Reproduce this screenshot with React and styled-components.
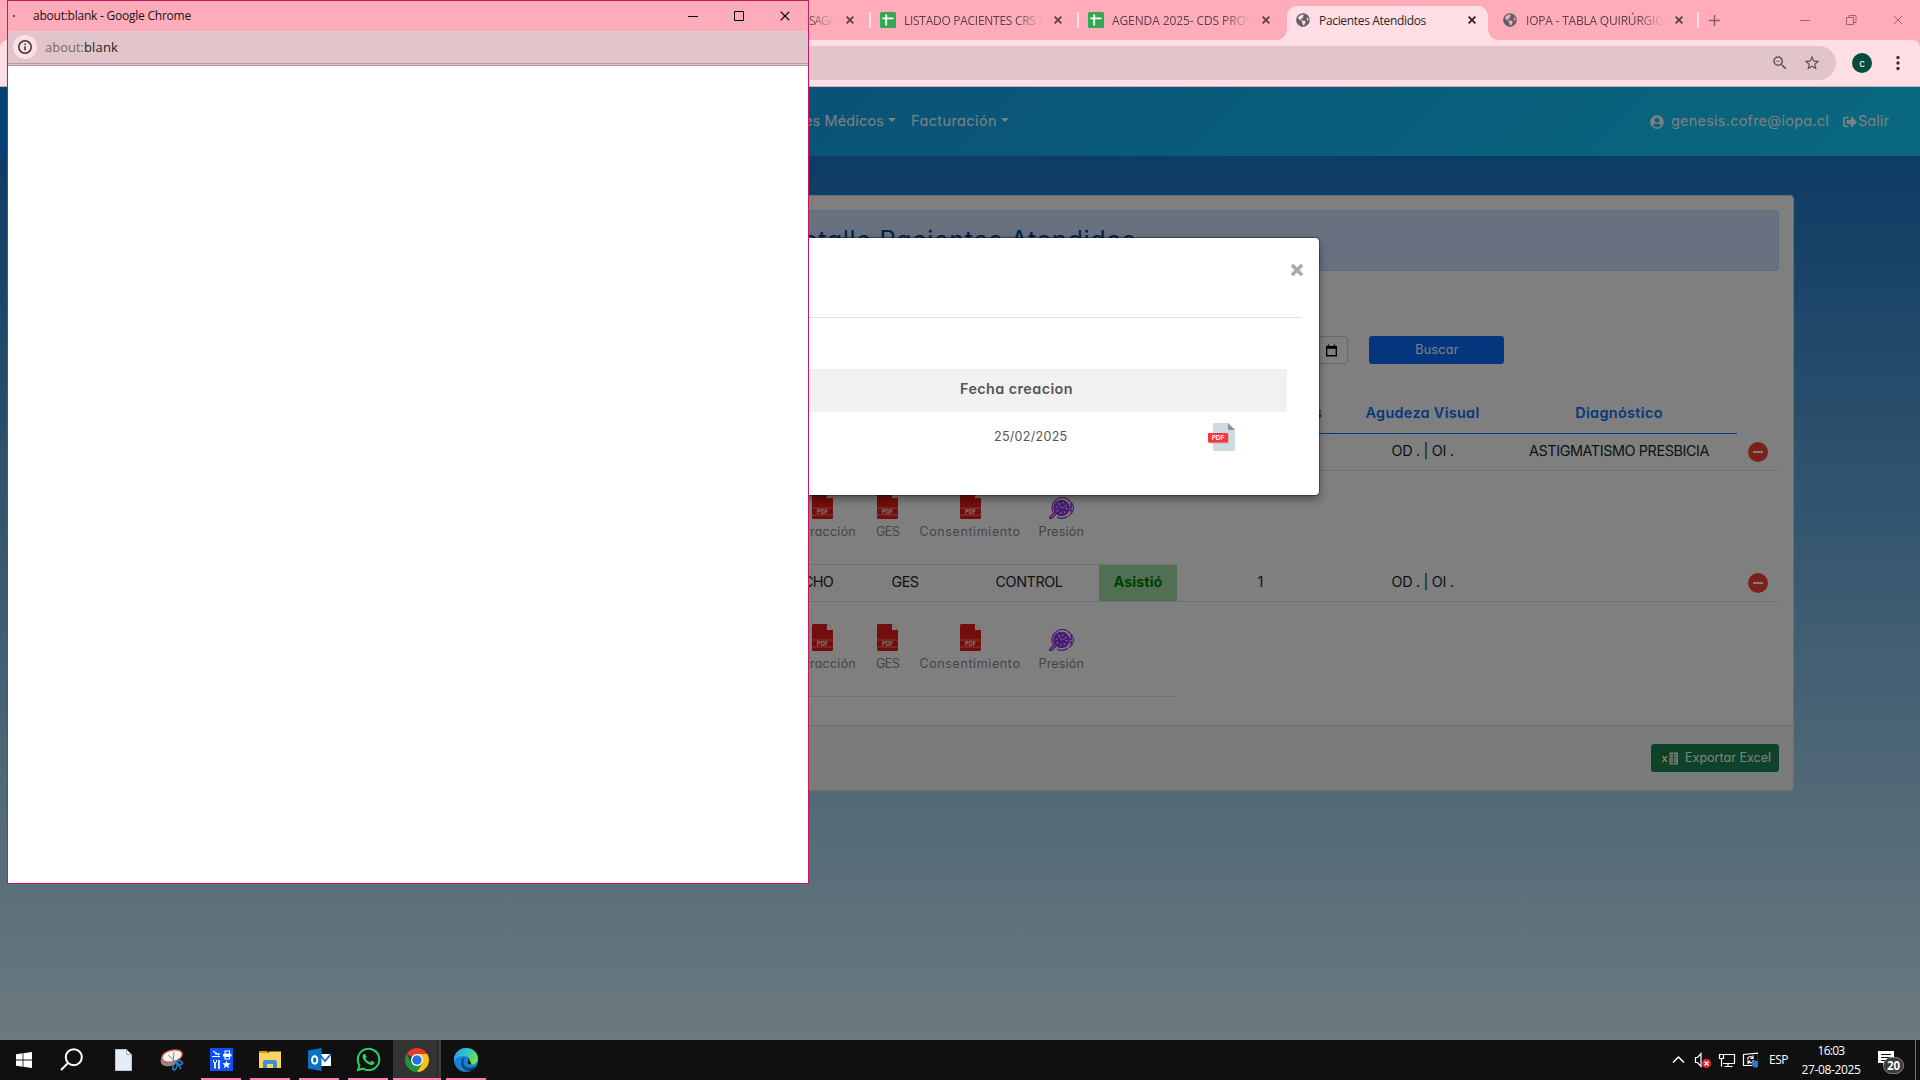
import React, { useLayoutEffect, useRef, useState } from "react";
import styled, { createGlobalStyle } from "styled-components";
import { FaUserCircle, FaSignOutAlt, FaGlobeAmericas, FaWhatsapp } from "react-icons/fa";
import { MdStarBorder, MdOutlineZoomOut } from "react-icons/md";

const SYSTEM = '"Open Sans", "Noto Sans", sans-serif';
const BRAND = 'Inter, "Open Sans", sans-serif';

const Global = createGlobalStyle`
  * { box-sizing: border-box; }
  body { margin: 0; overflow: hidden; background: #101010; font-family: ${SYSTEM}; }
  svg { display: block; flex: none; }
`;

const Desktop = styled.div`
  position: relative;
  width: 1920px;
  height: 1080px;
  display: flex;
  flex-direction: column;
  overflow: hidden;
`;

/* ---------- text ---------- */
const Span = styled.span`
  display: inline-block;
  white-space: nowrap;
  line-height: 1.3;
  flex: none;
  font-family: ${(p) => (p.$sys ? SYSTEM : BRAND)};
  font-size: ${(p) => p.$size || 14}px;
  font-weight: ${(p) => p.$weight || 400};
  color: ${(p) => p.$color || "inherit"};
  font-feature-settings: "cv11";
`;

/* Spreads the letters of a label over a set width. */
function Label({ w, sys, size, weight, color, children }) {
  const ref = useRef(null);
  const [spacing, setSpacing] = useState(0);
  useLayoutEffect(() => {
    if (w) setSpacing((w - ref.current.getBoundingClientRect().width) / String(children).length);
  }, [w, children]);
  return (
    <Span ref={ref} $sys={sys} $size={size} $weight={weight} $color={color} style={{ letterSpacing: spacing }}>
      {children}
    </Span>
  );
}

/* ---------- browser frame ---------- */
const Browser = styled.div`
  display: flex;
  flex-direction: column;
  height: 1040px;
  background: #ffacba;
`;
const TabStrip = styled.div`
  display: flex;
  align-items: center;
  height: 40px;
  padding-left: 809px;
`;
const Tab = styled.div`
  display: flex;
  align-items: center;
  width: ${(p) => p.$w}px;
  height: 40px;
  padding-left: ${(p) => p.$pad || 0}px;
  color: #5b3f48;
`;
const ActiveTab = styled(Tab)`
  position: relative;
  align-self: flex-end;
  height: 34px;
  padding-bottom: 6px;
  border-radius: 10px 10px 0 0;
  background: #ffdfe5;
  color: #2b1f24;
  &::before, &::after {
    content: "";
    position: absolute;
    bottom: 0;
    width: 10px;
    height: 10px;
  }
  &::before { left: -10px; background: radial-gradient(circle at 0 0, transparent 9.5px, #ffdfe5 10px); }
  &::after { right: -10px; background: radial-gradient(circle at 100% 0, transparent 9.5px, #ffdfe5 10px); }
`;
const TabTitle = styled.div`
  width: ${(p) => p.$w}px;
  margin-left: ${(p) => (p.$gap === undefined ? 8 : p.$gap)}px;
  padding-top: 1px;
  overflow: hidden;
  display: flex;
  ${(p) => p.$fade && "mask-image: linear-gradient(90deg, #000 calc(100% - 26px), transparent);"}
`;
const Separator = styled.div`
  width: 2px;
  height: 16px;
  flex: none;
  background: #ffdfe5;
  border-radius: 1px;
`;
const Push = styled.div`
  width: ${(p) => p.$w}px;
  height: ${(p) => p.$h || 0}px;
  flex: none;
`;
const Toolbar = styled.div`
  display: flex;
  align-items: center;
  height: 47px;
  background: #ffdfe5;
  border-bottom: 1px solid #c9b0b5;
  border-radius: 8px 8px 0 0;
  color: #5d5659;
`;
const Omnibox = styled.div`
  display: flex;
  align-items: center;
  justify-content: flex-end;
  gap: 14px;
  width: 1736px;
  height: 34px;
  margin-left: 100px;
  padding-right: 15px;
  border-radius: 17px;
  background: #e1c5ca;
`;
const Avatar = styled.div`
  display: flex;
  align-items: center;
  justify-content: center;
  width: 20px;
  height: 20px;
  margin: 0 24px 0 16px;
  border-radius: 50%;
  background: #004d40;
  color: #fff;
`;

function Cross({ size = 8, stroke = 1.8 }) {
  return (
    <svg width={size} height={size} viewBox="0 0 8 8" stroke="currentColor" strokeWidth={stroke} fill="none">
      <path d="M.6.6 7.4 7.4M7.4.6.6 7.4" />
    </svg>
  );
}
function Sheets() {
  return (
    <svg width="16" height="16" viewBox="0 0 16 16">
      <rect width="16" height="16" rx="1.5" fill="#34a853" />
      <path d="M6.2 2.5v11M2.5 6.3h11" stroke="#fff" strokeWidth="1.8" />
    </svg>
  );
}

/* ---------- web page ---------- */
const Page = styled.div`
  position: relative;
  flex: 1;
  display: flex;
  flex-direction: column;
  background: linear-gradient(#1a78c8, #d8f4fe) 0 69px / 100% 884px no-repeat;
`;
const Backdrop = styled.div`
  position: absolute;
  inset: 0;
  background: rgba(0, 0, 0, 0.5);
`;
const Navbar = styled.nav`
  display: flex;
  align-items: center;
  height: 69px;
  padding: 0 31px 0 804px;
  background: linear-gradient(135deg, #0e80e8, #14a6f0 42%, #12d2fe);
  color: #ffffff;
`;
const Caret = styled.i`
  margin: 1px 15px 4px 4px;
  border: 4px solid transparent;
  border-top-color: currentColor;
  border-bottom: 0;
`;
const NavUser = styled.div`
  display: flex;
  align-items: center;
  gap: ${(p) => p.$gap}px;
  margin-left: ${(p) => p.$left};
`;
const Card = styled.section`
  display: flex;
  flex-direction: column;
  width: 1668px;
  height: 596px;
  margin: 39px 0 0 126px;
  border: 1px solid #dcdcdc;
  border-radius: 4px;
  background: #fff;
  overflow: hidden;
`;
const CardBody = styled.div`
  flex: 1;
  display: flex;
  flex-direction: column;
  padding: 14px;
`;
const Banner = styled.div`
  display: flex;
  align-items: center;
  justify-content: center;
  height: 61px;
  border: 1px solid #b6d4fe;
  border-radius: 4px;
  background: #cfe2ff;
`;
const Filters = styled.div`
  display: flex;
  justify-content: flex-end;
  gap: 21px;
  margin: 65px 275px 0 0;
`;
const DateInput = styled.div`
  display: flex;
  align-items: center;
  justify-content: flex-end;
  width: 220px;
  height: 28px;
  padding-right: 10px;
  border: 1px solid #ced4da;
  border-radius: 3px;
`;
const Button = styled.button`
  display: flex;
  align-items: center;
  justify-content: center;
  gap: 7px;
  width: ${(p) => p.$w}px;
  height: 28px;
  padding: 1px 0 0 1px;
  border: 0;
  border-radius: 3px;
  background: ${(p) => p.$bg};
  color: #fff;
`;
const Row = styled.div`
  display: grid;
  grid-template-columns: 608px 102px 108px 140px 78px 167px 157px 236px 42px;
  height: ${(p) => p.$h}px;
  border-bottom: ${(p) => (p.$head ? 0 : "1px solid #dee2e6")};
`;
const Cell = styled.div`
  display: flex;
  align-items: center;
  justify-content: ${(p) => (p.$end ? "flex-end" : "center")};
  padding-right: ${(p) => p.$end || 0}px;
  padding-bottom: 1px;
  color: ${(p) => (p.$head ? "#0d6efd" : "#212529")};
  background: ${(p) => (p.$ok ? "#a3e0a6" : "none")};
  border-bottom: ${(p) => (p.$head ? "1px solid #0d6efd" : 0)};
`;
const Details = styled.div`
  display: flex;
  justify-content: flex-end;
  gap: 20px;
  width: 1036px;
  height: ${(p) => p.$h}px;
  padding: 21px 93px 0 0;
  border-bottom: 1px solid #dee2e6;
  color: #8c8c8c;
`;
const Doc = styled.div`
  display: flex;
  flex-direction: column;
  align-items: center;
  gap: 5px;
  padding-top: ${(p) => p.$top || 0}px;
  margin-left: ${(p) => p.$shift || 0}px;
`;
const CardFooter = styled.footer`
  display: flex;
  align-items: center;
  justify-content: flex-end;
  height: 65px;
  padding-right: 14px;
  border-top: 1px solid #dfdfdf;
  background: #f7f7f7;
`;

function RedPdf() {
  return (
    <svg width="21" height="27" viewBox="0 0 21 27">
      <path d="M1.5 0H15l6 6v19.500a1.500 1.500 0 0 1-1.500 1.500h-18A1.500 1.500 0 0 1 0 25.500v-24A1.500 1.500 0 0 1 1.500 0z" fill="#e81c1c" />
      <path d="M15 0l6 6h-6z" fill="#fff" />
      <path d="M0 16h21M0 23h21" stroke="#ff9a9a" strokeWidth=".8" />
      <text x="10.500" y="22" fontSize="5.500" fontWeight="700" textAnchor="middle" fill="#ffe4e4" fontFamily="Inter, sans-serif">PDF</text>
    </svg>
  );
}
function EyeIcon() {
  return (
    <svg width="25" height="22" viewBox="0 0 25 22" fill="none" stroke="#9333ea">
      <path d="M7 3C11-1 18 0 20.500 4M19 19c-3 3-8 3-11 1M4 15.500C2 10 3 6 7 3" strokeWidth="1.200" />
      <path d="M20 3.500C23.500 6 24.500 9 24.500 11S23.500 16 20 18.500" strokeWidth="1.300" />
      <circle cx="12.500" cy="11" r="8.300" fill="#9333ea" stroke="none" />
      <circle cx="12.500" cy="11" r="5" stroke="#e9d5ff" strokeDasharray="1.200 2.730" strokeWidth="2" />
      <path d="m12.500 11-2.500-3.500M12.500 11l3.500-1" stroke="#e9d5ff" strokeWidth=".8" />
      <path d="M22 6.500v9" strokeWidth="2" strokeDasharray="2 .6" />
      <path d="M.5 20.500 6 15M2.500 21.500 7 17M0 21.500h3" strokeWidth="1.500" />
    </svg>
  );
}
function Minus() {
  return (
    <svg width="20" height="20" viewBox="0 0 20 20">
      <circle cx="10" cy="10" r="10" fill="#f44336" />
      <path d="M5 10h10" stroke="#fff" strokeWidth="2" />
    </svg>
  );
}

/* ---------- modal ---------- */
const Modal = styled.div`
  position: absolute;
  left: 600px;
  top: 151px;
  width: 719px;
  height: 257px;
  display: flex;
  flex-direction: column;
  padding: 0 17px;
  border-radius: 4px;
  background: #fff;
  box-shadow: 0 0 1px 1px rgba(0, 0, 0, 0.35), 0 4px 10px rgba(0, 0, 0, 0.4);
  color: #555;
`;
const ModalHead = styled.div`
  display: flex;
  justify-content: flex-end;
  height: 80px;
  padding-top: 26px;
  border-bottom: 1px solid #e0e0e0;
  color: #aaa;
  svg { margin-right: -1px; }
`;
const ModalTable = styled.div`
  display: grid;
  grid-template-columns: 310px 196px 164px;
  grid-template-rows: 43px 50px;
  margin: 51px 0 0;
`;
const ModalCell = styled.div`
  display: flex;
  align-items: center;
  padding-left: ${(p) => p.$pad || 0}px;
  padding-bottom: ${(p) => (p.$head ? 2 : 0)}px;
  background: ${(p) => (p.$head ? "#f1f1f1" : "none")};
`;

/* ---------- popup window ---------- */
const Popup = styled.div`
  position: absolute;
  left: 7px;
  top: 0;
  width: 802px;
  height: 884px;
  display: flex;
  flex-direction: column;
  border: 1px solid #c8195f;
  background: #fff;
`;
const PopupTitle = styled.div`
  display: flex;
  align-items: center;
  height: 30px;
  background: #ffacba;
  color: #1c1114;
`;
const Dot = styled.i`
  width: 2px;
  height: 2px;
  margin: 0 18px 0 5px;
  background: #8f3550;
`;
const WindowControls = styled.div`
  display: flex;
  align-items: center;
  gap: ${(p) => p.$gap}px;
  margin-left: auto;
  padding-right: ${(p) => p.$right}px;
  color: ${(p) => p.$color};
`;
const PopupBar = styled.div`
  display: flex;
  align-items: center;
  height: 35px;
  padding-left: 5px;
  background: #e1c5ca;
  border-bottom: 3px double #b3989d;
`;
const InfoDisc = styled.div`
  display: flex;
  align-items: center;
  justify-content: center;
  width: 24px;
  height: 24px;
  margin-right: 8px;
  border-radius: 50%;
  background: #ffdfe5;
`;

/* ---------- taskbar ---------- */
const Taskbar = styled.div`
  display: flex;
  height: 40px;
  background: #101010;
  color: #fff;
`;
const TaskItem = styled.div`
  display: flex;
  align-items: center;
  justify-content: center;
  width: ${(p) => p.$w}px;
  height: 40px;
  margin-left: ${(p) => p.$left || 0}px;
  background: ${(p) => (p.$active ? "linear-gradient(90deg,#333 44px,#222 44px,#222 45px,#3b3b3b 45px)" : "none")};
  padding-right: ${(p) => (p.$active ? 1 : 0)}px;
  padding-top: 1px;
  border-bottom: ${(p) => (p.$open ? "2px solid #ff82b4" : "2px solid transparent")};
  background-origin: border-box;
`;
const Tray = styled.div`
  display: flex;
  align-items: center;
  margin-left: auto;
`;
const Clock = styled.div`
  display: flex;
  flex-direction: column;
  align-items: center;
  gap: 3px;
  width: 62px;
  margin: 0 16px 0 12px;
`;
const Corner = styled.div`
  width: 1px;
  height: 40px;
  margin-right: 4px;
  background: #777;
`;

function Win() {
  return (
    <svg width="16" height="16" viewBox="0 0 16 16" fill="#fff">
      <path d="M0 2.200 6.600 1.300v6.200H0zM7.400 1.200 16 0v7.500H7.400zM0 8.400h6.600v6.300L0 13.800zM7.400 8.400H16V16l-8.600-1.200z" />
    </svg>
  );
}
function SearchGlass() {
  return (
    <svg width="23" height="23" viewBox="0 0 23 23" fill="none" stroke="#fff" strokeWidth="2">
      <circle cx="13.800" cy="9.200" r="8" />
      <path d="M8 15 1 22" />
    </svg>
  );
}
function Paper() {
  return (
    <svg width="17" height="22" viewBox="0 0 17 22">
      <path d="M.5.5h11l5 5v16H.5z" fill="#e4ecf7" stroke="#b9c7dc" />
      <path d="M11.500.5v5h5z" fill="#fff" stroke="#8b9bb5" strokeWidth=".8" />
    </svg>
  );
}
function Snip() {
  return (
    <svg width="24" height="24" viewBox="0 0 24 24" fill="none">
      <path d="M1 11c-2 7 6 9 13 6l8-10z" fill="#8b8b8b" />
      <ellipse cx="12" cy="8" rx="10.500" ry="5.800" transform="rotate(-14 12 8)" fill="#f3f3f3" stroke="#e0453e" strokeWidth="1.300" />
      <path d="M8 7l8 7M14 4l-1 11" stroke="#888" strokeWidth="1" />
      <ellipse cx="19.500" cy="14.500" rx="3" ry="1.700" transform="rotate(25 19.500 14.500)" stroke="#2383c4" strokeWidth="1.500" />
      <ellipse cx="15" cy="18.500" rx="1.800" ry="3.500" transform="rotate(20 15 18.500)" stroke="#2383c4" strokeWidth="1.500" />
      <path d="m18 16 3 5" stroke="#2383c4" strokeWidth="1.500" />
    </svg>
  );
}
function Tools() {
  return (
    <svg width="23" height="23" viewBox="0 0 23 23">
      <rect width="23" height="23" fill="#0a50f5" />
      <path d="M2 8.500h8M3 3l6 4M5 6h5" stroke="#fff" strokeWidth="1.200" />
      <path d="M15 3h4.500v3H15zM15 8.500h4.500V11H15z" fill="none" stroke="#fff" strokeWidth="1.100" />
      <path d="M13 7.200h8.500" stroke="#fff" strokeWidth="2.400" />
      <path d="M5 14v6.500M9 12v9" stroke="#fff" strokeWidth="1.700" />
      <path d="M3.500 12v2l1.500.8 1.500-.8v-2" stroke="#fff" fill="none" />
      <path d="m16.500 12.500 1.100 2.800h3.200l-2.500 1.900.9 3-2.700-1.800-2.700 1.800.9-3-2.500-1.900h3.200z" fill="#fff" />
    </svg>
  );
}
function Folder() {
  return (
    <svg width="22" height="19" viewBox="0 0 22 19">
      <path d="M0 1h8l1.500 2H0z" fill="#d9960e" />
      <path d="M0 3h9l1.500-1.500H22V18H0z" fill="#fed25e" />
      <path d="M4 18v-6.500L5.500 10h11l1.500 1.500V18h-4v-4H8v4z" fill="#3f92d2" />
    </svg>
  );
}
function Outlook() {
  return (
    <svg width="23" height="23" viewBox="0 0 23 23">
      <path d="M12 6h11v12H12z" fill="#fff" />
      <path d="m13 8 4 5 6-7" fill="none" stroke="#1072c6" strokeWidth="1.800" />
      <path d="M0 2.500 13.500 0v23L0 20.500z" fill="#0872c4" />
      <ellipse cx="6.700" cy="12" rx="2.700" ry="3.700" fill="none" stroke="#fff" strokeWidth="1.900" />
    </svg>
  );
}
function Chrome() {
  return (
    <svg width="24" height="24" viewBox="0 0 24 24">
      <path d="M12 12 1.610 6A12 12 0 0 1 22.390 6z" fill="#e33b2e" />
      <path d="M12 12V6h10.390A12 12 0 0 1 12 24l5.200-9z" fill="#fbc116" />
      <path d="m12 12 5.200 3L12 24A12 12 0 0 1 1.610 6l5.200 9z" fill="#229342" />
      <circle cx="12" cy="12" r="6" fill="#fff" />
      <circle cx="12" cy="12" r="4.700" fill="#1a73e8" />
    </svg>
  );
}
function Edge() {
  return (
    <svg width="24" height="24" viewBox="0 0 24 24">
      <defs>
        <linearGradient id="edgeTop" x1="0" y1="0" x2="1" y2=".4">
          <stop offset="0" stopColor="#2aa5e0" />
          <stop offset=".55" stopColor="#2fc2c9" />
          <stop offset="1" stopColor="#6be04f" />
        </linearGradient>
      </defs>
      <circle cx="12" cy="12" r="12" fill="#1683d8" />
      <path d="M0 11C1 4 6 0 12 0c7 0 12 5 12 10.500 0 4-3 6-6.500 6-3 0-4-1-3.500-2 2-3 0-6.500-4-6.500C5 8 1 10 0 14z" fill="url(#edgeTop)" />
      <path d="M8.500 10C5 14 8 23 15 23.600c4-.6 6.500-3 7.500-5.600-5 3-13 2-13-4 0-2 .5-3 1.500-4z" fill="#114a8b" />
      <path d="M13.800 14.500c1.500-2 .7-4-.8-5.200 3 1 3 5.200 4.500 7.200-2.500 0-4-.8-3.700-2z" fill="#101010" />
      <path d="M17 20.500c3-.2 5-1.500 7-4v8h-9z" fill="#101010" opacity=".5" />
    </svg>
  );
}
function TrayIcons() {
  return (
    <svg width="86" height="24" viewBox="0 0 86 24" fill="none" stroke="#fff" strokeWidth="1.200">
      <path d="m1 14.500 5.500-5.500 5.500 5.500" strokeWidth="1.500" />
      <path d="M23.500 9.500h2l3.500-4v13l-3.500-4h-2z" />
      <circle cx="34.500" cy="15.500" r="4.700" fill="#d9252b" stroke="none" />
      <path d="m32.500 13.500 4 4m0-4-4 4" strokeWidth="1.300" />
      <path d="M52 6.500h10.500v9H51M56 15.500v3M52.500 18.500h8M47.500 6.500h4v4h-4zM49.500 10.500v8" />
      <path d="M80 17.500H71.500v-11l15-1.500v11" />
      <path d="M75.500 11.500c0-3 4-4 5-1M81 7.500v3h-2.500M81.500 12c0 3-4 4-5 1M76 16v-3h2.500" />
      <circle cx="83.500" cy="16" r="3.600" fill="#2b78c5" stroke="none" />
    </svg>
  );
}
function Notice() {
  return (
    <svg width="28" height="28" viewBox="0 0 28 28">
      <path d="M0 5h16v12H9l-4 3v-3H0z" fill="#fff" />
      <path d="M3 8.500h10M3 11.500h10M3 14.500h5" stroke="#101010" />
      <rect x="5.500" y="11.500" width="20" height="16" rx="8" fill="#3a3a3a" stroke="#888" strokeWidth="1" />
      <text x="15.500" y="23.500" fontSize="11.500" fontWeight="700" textAnchor="middle" fill="#fff" fontFamily="Open Sans, sans-serif">20</text>
    </svg>
  );
}

function DocList({ h, top }) {
  return (
    <Details $h={h}>
      {[["Refracción", 66.5], ["GES", 23.5], ["Consentimiento", 101]].map(([name, w]) => (
        <Doc key={name} $top={top}>
          <RedPdf />
          <Label size={12.5} w={w}>{name}</Label>
        </Doc>
      ))}
      <Doc $top={top + 5} $shift={-2}>
        <EyeIcon />
        <Label size={12.5} w={45.5}>Presión</Label>
      </Doc>
    </Details>
  );
}

export default function App() {
  return (
    <Desktop>
      <Global />
      <Browser>
        <TabStrip>
          <Tab $w={60}>
            <TabTitle $w={25} $gap={0} $fade><Label sys size={12} w={26}>SAGA</Label></TabTitle>
            <Push $w={12} />
            <Cross />
          </Tab>
          <Separator />
          <Tab $w={206} $pad={9}>
            <Sheets />
            <TabTitle $w={138} $fade><Label sys size={12} w={145}>LISTADO PACIENTES CRS M</Label></TabTitle>
            <Push $w={12} />
            <Cross />
          </Tab>
          <Separator />
          <Tab $w={208} $pad={9}>
            <Sheets />
            <TabTitle $w={138} $fade><Label sys size={12} w={144}>AGENDA 2025- CDS PROVI</Label></TabTitle>
            <Push $w={12} />
            <Cross />
          </Tab>
          <ActiveTab $w={201} $pad={9}>
            <FaGlobeAmericas size={14} color="#5f6368" />
            <TabTitle $w={138} $gap={9}><Label sys size={12} w={107}>Pacientes Atendidos</Label></TabTitle>
            <Push $w={11} />
            <Cross />
          </ActiveTab>
          <Tab $w={209} $pad={15}>
            <FaGlobeAmericas size={14} color="#5f6368" />
            <TabTitle $w={138} $fade $gap={9}><Label sys size={12} w={144}>IOPA - TABLA QUIRÚRGICA</Label></TabTitle>
            <Push $w={11} />
            <Cross />
          </Tab>
          <Separator />
          <Push $w={10} />
          <svg width="11" height="11" viewBox="0 0 11 11" stroke="#8a5c68" strokeWidth="1.500"><path d="M5.500 0v11M0 5.500h11" /></svg>
          <WindowControls $gap={36} $right={17} $color="#9d6470">
            <svg width="10" height="10" stroke="currentColor"><path d="M0 5.500h10" /></svg>
            <svg width="11" height="11" fill="none" stroke="currentColor"><path d="M.5 2.500h7v7h-7zM3 2.500v-2h7v7H8" /></svg>
            <Cross size={10} stroke={0.8} />
          </WindowControls>
        </TabStrip>
        <Toolbar>
          <Omnibox>
            <MdOutlineZoomOut size={18} />
            <MdStarBorder size={18} />
          </Omnibox>
          <Avatar><Label size={10}>c</Label></Avatar>
          <svg width="4" height="16" viewBox="0 0 4 16" fill="#333"><circle cx="2" cy="2.500" r="1.700" /><circle cx="2" cy="8" r="1.700" /><circle cx="2" cy="13.500" r="1.700" /></svg>
        </Toolbar>

        <Page>
          <Navbar>
            <Label size={14.4} w={80}>es Médicos</Label>
            <Caret />
            <Label size={14.4} w={86}>Facturación</Label>
            <Caret />
            <NavUser $gap={7} $left="auto">
              <FaUserCircle size={14} />
              <Label size={14.4} w={158}>genesis.cofre@iopa.cl</Label>
            </NavUser>
            <NavUser $gap={1} $left="14px">
              <FaSignOutAlt size={14} />
              <Label size={14.4} w={31}>Salir</Label>
            </NavUser>
          </Navbar>

          <Card>
            <CardBody>
              <Banner><Label size={25.2} w={352} color="#084298">Detalle Pacientes Atendidos</Label></Banner>
              <Filters>
                <DateInput>
                  <svg width="11" height="13" viewBox="0 0 12 13" fill="#000"><path d="M2 0h1.500v1.500h5V0H10v1.500h2V13H0V1.500h2zM1.500 4.500v7h9v-7z" fillRule="evenodd" /></svg>
                </DateInput>
                <Button $w={135} $bg="#0d6efd"><Label size={12.6} w={43.5}>Buscar</Label></Button>
              </Filters>
              <Push $h={31} />
              <Row $h={39} $head>
                <Cell $head />
                <Cell $head />
                <Cell $head />
                <Cell $head />
                <Cell $head />
                <Cell $head $end={22}><Label size={14.4} weight={600}>s</Label></Cell>
                <Cell $head><Label size={14.4} weight={600} w={114}>Agudeza Visual</Label></Cell>
                <Cell $head><Label size={14.4} weight={600} w={87.5}>Diagnóstico</Label></Cell>
              </Row>
              <Row $h={37}>
                <Cell /><Cell /><Cell /><Cell /><Cell /><Cell />
                <Cell><Label size={14.4} w={62}>OD . | OI .</Label></Cell>
                <Cell><Label size={14.4} w={180}>ASTIGMATISMO PRESBICIA</Label></Cell>
                <Cell><Minus /></Cell>
              </Row>
              <DocList h={94} top={0} />
              <Row $h={37}>
                <Cell />
                <Cell $end={18}><Label size={14.4} w={30}>CHO</Label></Cell>
                <Cell><Label size={14.4} w={27}>GES</Label></Cell>
                <Cell><Label size={14.4} w={67}>CONTROL</Label></Cell>
                <Cell $ok><Label size={14.4} weight={700} color="#008000" w={49}>Asistió</Label></Cell>
                <Cell><Label size={14.4}>1</Label></Cell>
                <Cell><Label size={14.4} w={62}>OD . | OI .</Label></Cell>
                <Cell />
                <Cell><Minus /></Cell>
              </Row>
              <DocList h={95} top={1} />
            </CardBody>
            <CardFooter>
              <Button $w={128} $bg="#198754">
                <svg width="18" height="16" viewBox="0 0 18 16">
                  <path d="M9 1.500h9v12H9z" fill="#fff" />
                  <path d="M10 4h7M10 6.500h7M10 9h7M10 11.500h7M13.500 2v11" stroke="#198754" strokeWidth=".8" />
                  <path d="M0 1.500 9.500 0v16L0 14.200z" fill="#2e7d32" />
                  <path d="m2.500 5 4.500 6M7 5l-4.500 6" stroke="#fff" strokeWidth="1.300" />
                </svg>
                <Label size={12.6} w={86}>Exportar Excel</Label>
              </Button>
            </CardFooter>
          </Card>
          <Backdrop />

          <Modal>
            <ModalHead><Cross size={12} stroke={2.4} /></ModalHead>
            <ModalTable>
              <ModalCell $head />
              <ModalCell $head $pad={33}><Label size={14.4} weight={600} w={113}>Fecha creacion</Label></ModalCell>
              <ModalCell $head />
              <ModalCell />
              <ModalCell $pad={67}><Label size={12.6} w={73.5}>25/02/2025</Label></ModalCell>
              <ModalCell $pad={85}>
                <svg width="28" height="28" viewBox="0 0 28 28">
                  <path d="M6.500 0H20l7 7v19.500a1.500 1.500 0 0 1-1.500 1.500h-19A1.500 1.500 0 0 1 5 26.500v-25A1.500 1.500 0 0 1 6.500 0z" fill="#d1d9e0" />
                  <path d="M20 0l7 7h-6a1 1 0 0 1-1-1z" fill="#8695a5" />
                  <rect x="1" y="11" width="20" height="9.500" rx="1" fill="#b0bac4" />
                  <rect y="10" width="20" height="9.500" rx="1" fill="#ff3535" />
                  <text x="10" y="17.200" fontSize="6.500" fontWeight="600" textAnchor="middle" fill="#fff" fontFamily="Inter, sans-serif">PDF</text>
                </svg>
              </ModalCell>
            </ModalTable>
          </Modal>
        </Page>
      </Browser>

      <Taskbar>
        <TaskItem $w={48}><Win /></TaskItem>
        <TaskItem $w={46}><SearchGlass /></TaskItem>
        <TaskItem $w={48} $left={5}><Paper /></TaskItem>
        <TaskItem $w={48} $left={1}><Snip /></TaskItem>
        <TaskItem $w={40} $left={5} $open><Tools /></TaskItem>
        <TaskItem $w={40} $left={9} $open><Folder /></TaskItem>
        <TaskItem $w={40} $left={9} $open><Outlook /></TaskItem>
        <TaskItem $w={40} $left={9} $open><FaWhatsapp size={27} color="#25d366" /></TaskItem>
        <TaskItem $w={48} $left={5} $open $active><Chrome /></TaskItem>
        <TaskItem $w={40} $left={5} $open><Edge /></TaskItem>
        <Tray>
          <TrayIcons />
          <Push $w={11} />
          <Label sys size={12} w={19}>ESP</Label>
          <Clock>
            <Label sys size={12} w={27}>16:03</Label>
            <Label sys size={12} w={59}>27-08-2025</Label>
          </Clock>
          <Notice />
          <Push $w={9} />
          <Corner />
        </Tray>
      </Taskbar>

      <Popup>
        <PopupTitle>
          <Dot />
          <Label sys size={12} w={158} color="#1c1114">about:blank - Google Chrome</Label>
          <WindowControls $gap={36} $right={18} $color="#000">
            <svg width="10" height="10" stroke="currentColor"><path d="M0 5.500h10" /></svg>
            <svg width="10" height="10" fill="none" stroke="currentColor"><path d="M.5.5h9v9h-9z" /></svg>
            <Cross size={10} stroke={0.9} />
          </WindowControls>
        </PopupTitle>
        <PopupBar>
          <InfoDisc>
            <svg width="14" height="14" viewBox="0 0 14 14" fill="none" stroke="#333" strokeWidth="1.500"><circle cx="7" cy="7" r="6.200" /><path d="M7 6.300v4M7 3.600v1.400" /></svg>
          </InfoDisc>
          <Label sys size={13} w={39} color="#7a686d">about:</Label>
          <Label sys size={13} w={34} color="#2a2226">blank</Label>
        </PopupBar>
      </Popup>
    </Desktop>
  );
}
